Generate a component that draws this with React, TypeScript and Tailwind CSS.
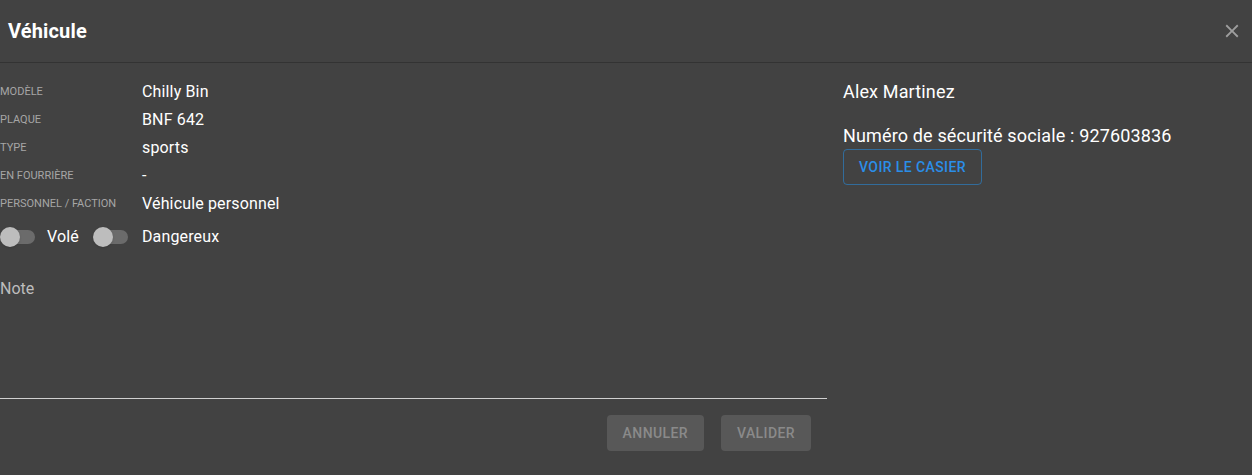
import React, { useState } from 'react';

const rows = [
  { label: 'Modèle', value: 'Chilly Bin' },
  { label: 'Plaque', value: 'BNF 642' },
  { label: 'Type', value: 'sports' },
  { label: 'En fourrière', value: '-' },
  { label: 'Personnel / Faction', value: 'Véhicule personnel' },
];

const Toggle = ({ on, onClick }: { on: boolean; onClick: () => void }) => (
  <button onClick={onClick} className="relative w-[36px] h-[20px] flex items-center shrink-0">
    <span className={`absolute left-[10px] w-[25px] h-[14px] rounded-full ${on ? 'bg-[#1e6fb8]' : 'bg-[#6b6b6b]'}`}></span>
    <span className={`absolute top-0 w-[20px] h-[20px] rounded-full shadow ${on ? 'left-[16px] bg-[#2196f3]' : 'left-0 bg-[#bdbdbd]'}`}></span>
  </button>
);

const App = () => {
  const [stolen, setStolen] = useState(false);
  const [danger, setDanger] = useState(false);
  const [note, setNote] = useState('');

  return (
    <div className="w-[1252px] h-[475px] bg-[#424242] text-white font-['Roboto',sans-serif] flex flex-col overflow-hidden">
      <div className="h-[63px] flex items-center justify-between pl-2 pr-[9px] border-b border-[#333333] shrink-0">
        <h2 className="text-[20px] font-bold leading-none tracking-[0.15px]">Véhicule</h2>
        <button className="text-[#9e9e9e]">
          <svg width="22" height="22" viewBox="0 0 24 24" fill="currentColor">
            <path d="M19 6.41 17.59 5 12 10.59 6.41 5 5 6.41 10.59 12 5 17.59 6.41 19 12 13.41 17.59 19 19 17.59 13.41 12z" />
          </svg>
        </button>
      </div>

      <div className="flex gap-4 pt-[15px]">
        <div className="w-[827px] flex flex-col">
          {rows.map((r) => (
            <div key={r.label} className="h-[28px] flex items-center">
              <span className="w-[142px] text-[11px] uppercase text-[#a6a6a6]">{r.label}</span>
              <span className="text-[16px] tracking-[0.15px]">{r.value}</span>
            </div>
          ))}
          <div className="h-[38px] flex items-center">
            <Toggle on={stolen} onClick={() => setStolen(!stolen)} />
            <span className="ml-[11px] text-[16px] tracking-[0.15px]">Volé</span>
            <span className="ml-[14px]">
              <Toggle on={danger} onClick={() => setDanger(!danger)} />
            </span>
            <span className="ml-[13px] text-[16px] tracking-[0.15px]">Dangereux</span>
          </div>

          <div className="mt-[15px] h-[128px] border-b border-[#d0d0d0] flex flex-col">
            <textarea
              placeholder="Note"
              value={note}
              onChange={(e) => setNote(e.target.value)}
              className="flex-1 resize-none bg-transparent outline-none text-[16px] text-white placeholder:text-[#bdbdbd] pt-[6px]"
            />
          </div>

          <div className="flex justify-end gap-[17px] mt-4 pr-4">
            <button disabled className="h-[36px] px-4 rounded bg-[#585858] text-[#8a8a8a] text-[14px] font-medium tracking-[0.4px]">ANNULER</button>
            <button disabled className="h-[36px] px-4 rounded bg-[#585858] text-[#8a8a8a] text-[14px] font-medium tracking-[0.4px]">VALIDER</button>
          </div>
        </div>

        <div className="flex flex-col items-start mt-[-1px]">
          <p className="h-[28px] flex items-center text-[18px] tracking-[0.15px]">Alex Martinez</p>
          <p className="mt-[16px] h-[28px] flex items-center text-[18px] tracking-[0.15px]">Numéro de sécurité sociale : 927603836</p>
          <button className="h-[36px] px-[15px] rounded border border-[#2196f3]/50 text-[#2b8ee8] text-[14px] font-medium tracking-[0.4px]">
            VOIR LE CASIER
          </button>
        </div>
      </div>
    </div>
  );
};

export default App;
